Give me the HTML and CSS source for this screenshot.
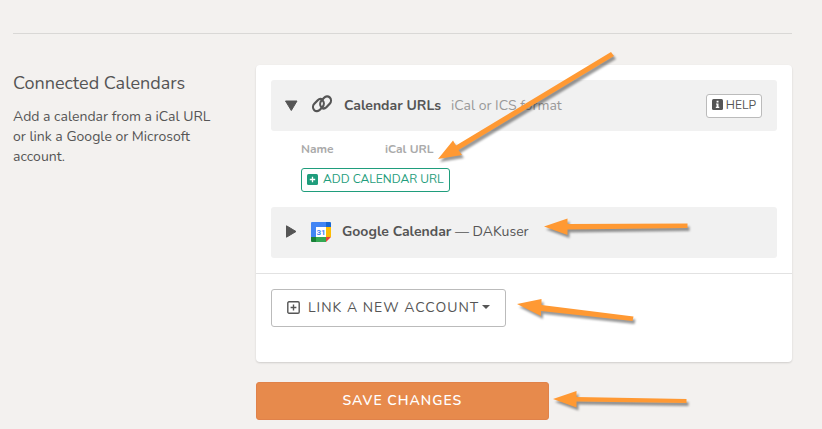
FILE: index.html
```html
<!DOCTYPE html>
<html lang="en">
<head>
    <meta charset="UTF-8">
    <meta name="viewport" content="width=device-width, initial-scale=1.0">
    <title>Connected Calendars</title>
    <link rel="stylesheet" href="styles.css">
</head>
<body>
    <main class="page">
        <hr class="separator">

        <div class="settings">
            <!-- Section description -->
            <section class="intro">
                <h2 class="intro-title">Connected Calendars</h2>
                <p class="intro-text">Add a calendar from a iCal URL or link a Google or Microsoft account.</p>
            </section>

            <form class="form">
                <div class="card">
                    <div class="accounts">
                        <!-- Calendar URLs -->
                        <div class="account">
                            <button type="button" class="toggle" aria-label="Collapse Calendar URLs" aria-expanded="true">
                                <svg width="14" height="14" viewBox="0 0 14 14"><path d="M1.5 2h11.500L7.300 11.500z" fill="#555" stroke="#555" stroke-linejoin="round"/></svg>
                            </button>
                            <svg class="account-icon" width="24" height="22" viewBox="0 0 24 22" fill="none" stroke="#555" stroke-width="2" stroke-linecap="round">
                                <g transform="translate(0 -2) scale(1 1.15)">
                                    <path d="M11.400 12.300C9.600 10.700 9.700 8.300 11.400 6.700L14 4.300c1.700-1.500 4.200-1.700 5.800-.4 1.700 1.400 1.700 3.700 0 5.300L16.500 12.300c-1.500 1.300-3.300 1.500-4.900.6"/>
                                    <path d="M12.400 5.700C10.800 4.800 9 5.100 7.600 6.400L4.200 9.500c-1.700 1.600-1.700 3.900 0 5.300 1.600 1.300 4.100 1.100 5.800-.4l2.600-2.400c1.700-1.600 1.800-4 0-5.600"/>
                                </g>
                            </svg>
                            <span class="account-name"><b>Calendar URLs</b></span>
                            <span class="account-hint">iCal or ICS format</span>
                            <button type="button" class="btn btn-small btn-help">
                                <svg width="11" height="11" viewBox="0 0 11 11"><rect width="11" height="11" rx="1.5" fill="#555"/><path d="M4.600 1.800h1.900v1.700H4.600zM4 4.500h2.500v3.300h.8v1.100H3.800V7.800h.8V5.600H4z" fill="#fff"/></svg>
                                HELP
                            </button>
                        </div>

                        <div class="urls">
                            <table class="url-table">
                                <thead>
                                    <tr><th scope="col">Name</th><th scope="col">iCal URL</th></tr>
                                </thead>
                            </table>
                            <button type="button" class="btn btn-small btn-add">
                                <svg width="11" height="11" viewBox="0 0 11 11"><rect width="11" height="11" rx="1.5" fill="#1f9d7c"/><path d="M5.500 2.800v5.400M2.800 5.500h5.400" stroke="#fff" stroke-width="1.3"/></svg>
                                ADD CALENDAR URL
                            </button>
                        </div>

                        <!-- Google Calendar -->
                        <div class="account account-linked">
                            <button type="button" class="toggle" aria-label="Expand Google Calendar" aria-expanded="false">
                                <svg width="14" height="14" viewBox="0 0 14 14"><path d="M2.500 .8v11.400L12 6.500z" fill="#555" stroke="#555" stroke-linejoin="round"/></svg>
                            </button>
                            <svg class="account-icon" width="22" height="22" viewBox="0 0 22 22">
                                <path d="M2 1h14v5H6v10H1V2a1 1 0 0 1 1-1z" fill="#4285f4"/>
                                <path d="M16 1h4a1 1 0 0 1 1 1v4h-5z" fill="#1967d2"/>
                                <path d="M16 6h5v10h-5z" fill="#fbbc04"/>
                                <path d="M6 16h10v5H6z" fill="#34a853"/>
                                <path d="M1 16h5v5H2a1 1 0 0 1-1-1z" fill="#188038"/>
                                <path d="M16 16h5l-5 5z" fill="#ea4335"/>
                                <path d="M6 6h10v10H6z" fill="#fff"/>
                                <text class="google-day" x="11" y="14" text-anchor="middle">31</text>
                            </svg>
                            <span class="account-name"><b>Google Calendar</b> — DAKuser</span>
                        </div>
                    </div>

                    <div class="link-row">
                        <button type="button" class="btn btn-link" aria-haspopup="true">
                            <svg width="13" height="13" viewBox="0 0 13 13" fill="none" stroke="#555" stroke-width="1.4"><rect x=".8" y=".8" width="11.4" height="11.4" rx="1.2"/><path d="M6.500 3.600v5.800M3.600 6.500h5.800"/></svg>
                            <span>LINK A NEW ACCOUNT</span>
                            <svg class="caret" width="8" height="4" viewBox="0 0 8 4"><path d="M0 0h8L4 4z" fill="#555"/></svg>
                        </button>
                    </div>
                </div>

                <button type="submit" class="btn btn-save">SAVE CHANGES</button>
            </form>
        </div>
    </main>

    <!-- Pointer arrows over the form -->
    <svg class="arrows" width="822" height="429" viewBox="0 0 822 429" fill="#ff9933" aria-hidden="true">
        <path d="M611 52l3 4-155.500 94 3.500 5-24 4 15-18.500 3 5z"/>
        <path d="M544 226.500l23.500-8v5.500l120-.5v4.500l-120 1.500v5.500z"/>
        <path d="M517 304l24.500-5v6l92 11.500-1 4.500-91.500-10v5z"/>
        <path d="M553 399l23.500-8v6l110 2v4l-110-1.500v6z"/>
    </svg>
</body>
</html>
```
FILE: styles.css
```css
* {
    box-sizing: border-box;
}

body {
    margin: 0;
    background-color: #f3f1ef;
    color: #555;
    font-family: Nunito, Lato, "Open Sans", sans-serif;
    font-size: 14px;
    line-height: 20px;
}

.page {
    padding: 33px 30px 8px 13px;
}

.separator {
    height: 1px;
    margin: 0 0 31px;
    border: 0;
    background-color: #d9d8d6;
}

.settings {
    display: grid;
    grid-template-columns: 208px 1fr;
    column-gap: 35px;
}

/* Section description */
.intro {
    padding-top: 6px;
}

.intro-title {
    margin: 0 0 12px;
    font-size: 18px;
    font-weight: 400;
    line-height: 24px;
}

.intro-text {
    margin: 0;
}

/* Card */
.card {
    margin-bottom: 20px;
    background-color: #fff;
    border-radius: 4px;
    box-shadow: 0 1px 2px rgba(0, 0, 0, 0.15);
}

.accounts {
    padding: 15px;
    border-bottom: 1px solid #e2e2e2;
}

.account {
    display: flex;
    align-items: center;
    height: 51px;
    padding: 0 15px 0 13px;
    background-color: #f1f1f1;
    border-radius: 3px;
}

.account-linked {
    padding-bottom: 2px;
}

.toggle {
    display: flex;
    padding: 0;
    border: 0;
    background: none;
    cursor: pointer;
}

.account-icon {
    margin: 0 10px 0 12px;
}

.account-hint {
    margin-left: 10px;
    color: #999;
}

.google-day {
    fill: #4285f4;
    font-family: Roboto, sans-serif;
    font-size: 8px;
    font-weight: 700;
}

/* Calendar URL list */
.urls {
    padding: 8px 30px 15px;
}

.url-table {
    margin-bottom: 9px;
    border-collapse: collapse;
}

.url-table th {
    min-width: 84px;
    padding: 0;
    color: #aaa;
    font-size: 12px;
    text-align: left;
}

/* Buttons */
.btn {
    display: flex;
    align-items: center;
    border: 1px solid #bbb;
    border-radius: 3px;
    background-color: #fff;
    color: #555;
    font-family: inherit;
    font-size: 14px;
    cursor: pointer;
}

.btn-small {
    height: 24px;
    padding: 0 5px 2px;
    font-size: 12px;
}

.btn-help {
    gap: 3px;
    margin-left: auto;
}

.btn-add {
    gap: 5px;
    border-color: #1f9d7c;
    color: #1f9d7c;
}

.link-row {
    padding: 15px 15px 35px;
}

.btn-link {
    gap: 8px;
    height: 38px;
    padding: 0 15px 2px;
    letter-spacing: 1px;
}

.caret {
    margin-left: -5px;
}

.btn-save {
    justify-content: center;
    width: calc(55% - 2px);
    height: 38px;
    padding-bottom: 3px;
    border-color: #e0824a;
    background-color: #e78a4c;
    color: #fff;
    font-weight: 600;
    letter-spacing: 1px;
}

/* Pointer arrows */
.arrows {
    position: absolute;
    top: 0;
    left: 0;
    filter: drop-shadow(2px 3px 1px rgba(0, 0, 0, 0.4));
    pointer-events: none;
}
```
